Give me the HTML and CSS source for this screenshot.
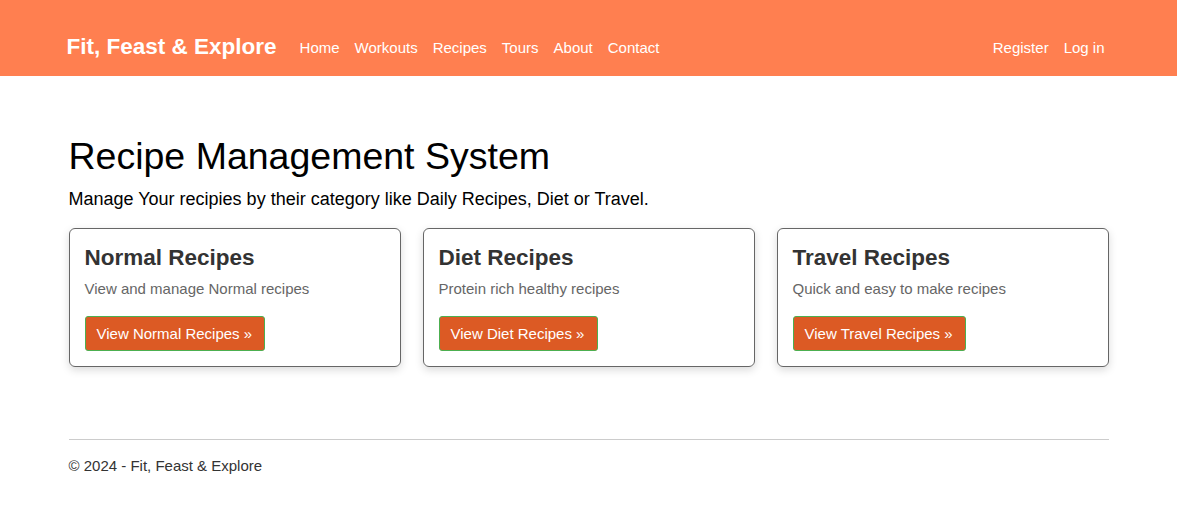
FILE: index.html
```html
<!DOCTYPE html>
<html>
<head>
<meta charset="utf-8">
<link rel="stylesheet" href="styles.css">
</head>
<body>
<header class="navbar">
  <div class="nav-inner">
    <a class="brand" href="#">Fit, Feast &amp; Explore</a>
    <nav class="nav-links">
      <a href="#">Home</a>
      <a href="#">Workouts</a>
      <a href="#">Recipes</a>
      <a href="#">Tours</a>
      <a href="#">About</a>
      <a href="#">Contact</a>
    </nav>
    <nav class="nav-right">
      <a href="#">Register</a>
      <a href="#">Log in</a>
    </nav>
  </div>
</header>
<main class="container">
  <h1 class="title">Recipe Management System</h1>
  <p class="lead">Manage Your recipies by their category like Daily Recipes, Diet or Travel.</p>
  <div class="cards">
    <div class="card">
      <h2>Normal Recipes</h2>
      <p>View and manage Normal recipes</p>
      <a class="btn" href="#">View Normal Recipes &raquo;</a>
    </div>
    <div class="card">
      <h2>Diet Recipes</h2>
      <p>Protein rich healthy recipes</p>
      <a class="btn" href="#">View Diet Recipes &raquo;</a>
    </div>
    <div class="card">
      <h2>Travel Recipes</h2>
      <p>Quick and easy to make recipes</p>
      <a class="btn" href="#">View Travel Recipes &raquo;</a>
    </div>
  </div>
  <hr class="rule">
  <footer class="footer">&copy; 2024 - Fit, Feast &amp; Explore</footer>
</main>
</body>
</html>
```
FILE: styles.css
```css
* { box-sizing: border-box; }
body {
  margin: 0;
  font-family: "Liberation Sans", Arial, sans-serif;
  color: #333;
  background: #fff;
}
a { text-decoration: none; }
.navbar {
  background: #ff7f50;
  height: 76px;
}
.nav-inner {
  width: 1070px;
  margin: 0 auto;
  padding: 18px 19px 0 13px;
  height: 100%;
  display: flex;
  align-items: center;
}
.brand {
  color: #fff;
  font-size: 22.5px;
  font-weight: bold;
  margin-right: 23px;
}
.nav-links, .nav-right {
  display: flex;
  gap: 15px;
}
.nav-links a, .nav-right a {
  color: #fff;
  font-size: 15px;
}
.nav-right { margin-left: auto; }
.container {
  width: 1040px;
  margin: 0 auto;
  padding-top: 58px;
}
.title {
  margin: 0;
  font-size: 37.5px;
  font-weight: normal;
  color: #000;
  line-height: 1.2;
}
.lead {
  margin: 9px 0 0;
  font-size: 18px;
  color: #000;
  line-height: 1.3;
}
.cards {
  display: flex;
  gap: 22px;
  margin-top: 17px;
}
.card {
  flex: 1;
  height: 139px;
  border: 1px solid #666;
  border-radius: 6px;
  padding: 15px 15px;
  box-shadow: 0 3px 8px rgba(0,0,0,0.15);
}
.card h2 {
  margin: 0;
  font-size: 22.5px;
  font-weight: bold;
  color: #333;
  line-height: 1.2;
}
.card p {
  margin: 8px 0 0;
  font-size: 15px;
  color: #666;
  line-height: 1.3;
}
.btn {
  display: inline-block;
  margin-top: 17px;
  background: #dc5a24;
  color: #fff;
  font-size: 15px;
  padding: 7px 11px;
  border: 1px solid #4caf50;
  border-radius: 3px;
  line-height: 19px;
  min-width: 180px;
}
.card:nth-child(2) .btn { min-width: 159px; }
.card:nth-child(3) .btn { min-width: 173px; }
.rule {
  margin: 72px 0 0;
  border: 0;
  border-top: 1px solid #ccc;
}
.footer {
  margin-top: 17px;
  font-size: 15px;
  color: #333;
}
```
